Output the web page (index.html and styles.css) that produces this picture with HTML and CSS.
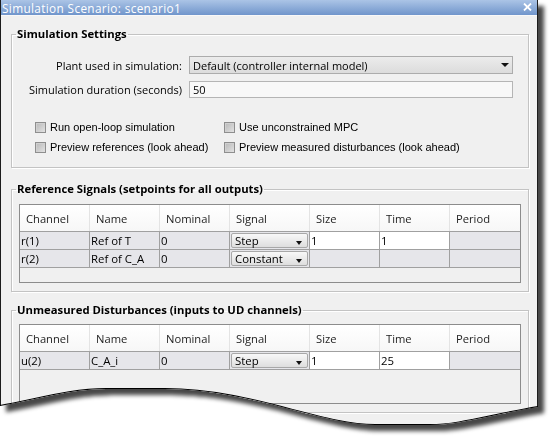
FILE: index.html
```html
<!DOCTYPE html>
<html>
<head>
<meta charset="utf-8">
<title>Simulation Scenario</title>
<link rel="stylesheet" href="styles.css">
</head>
<body>
<div class="shot">
  <div class="window">
    <div class="titlebar">
      <span class="title">Simulation Scenario: scenario1</span>
      <svg class="close" width="9" height="8" viewBox="0 0 9 8"><path d="M1 0.5 L8 7.5 M8 0.5 L1 7.5" stroke="#fff" stroke-width="1.8"/></svg>
    </div>
    <div class="content">
      <fieldset class="group g1">
        <legend>Simulation Settings</legend>
        <div class="form">
          <label class="flabel">Plant used in simulation:</label>
          <div class="combo"><span>Default (controller internal model)</span><span class="arrow"></span></div>
          <label class="flabel">Simulation duration (seconds)</label>
          <div class="textfield">50</div>
        </div>
        <div class="checks">
          <div class="check"><span class="box"></span>Run open-loop simulation</div>
          <div class="check"><span class="box"></span>Use unconstrained MPC</div>
          <div class="check"><span class="box"></span>Preview references (look ahead)</div>
          <div class="check"><span class="box"></span>Preview measured disturbances (look ahead)</div>
        </div>
      </fieldset>

      <fieldset class="group g2">
        <legend>Reference Signals (setpoints for all outputs)</legend>
        <div class="table">
          <div class="thead">
            <div class="th">Channel</div><div class="th">Name</div><div class="th">Nominal</div><div class="th">Signal</div><div class="th">Size</div><div class="th">Time</div><div class="th">Period</div>
          </div>
          <div class="tbody">
            <div class="td">r(1)</div><div class="td">Ref of T</div><div class="td">0</div>
            <div class="td sig"><div class="cellcombo"><span>Step</span><span class="arrow small"></span></div></div>
            <div class="td edit">1</div><div class="td edit">1</div><div class="td last"></div>
            <div class="td">r(2)</div><div class="td">Ref of C_A</div><div class="td">0</div>
            <div class="td sig"><div class="cellcombo"><span>Constant</span><span class="arrow small"></span></div></div>
            <div class="td"></div><div class="td"></div><div class="td last"></div>
          </div>
        </div>
      </fieldset>

      <fieldset class="group g3">
        <legend>Unmeasured Disturbances (inputs to UD channels)</legend>
        <div class="table t3">
          <div class="thead">
            <div class="th">Channel</div><div class="th">Name</div><div class="th">Nominal</div><div class="th">Signal</div><div class="th">Size</div><div class="th">Time</div><div class="th">Period</div>
          </div>
          <div class="tbody">
            <div class="td">u(2)</div><div class="td">C_A_i</div><div class="td">0</div>
            <div class="td sig"><div class="cellcombo"><span>Step</span><span class="arrow small"></span></div></div>
            <div class="td edit">1</div><div class="td edit">25</div><div class="td last"></div>
          </div>
        </div>
      </fieldset>
    </div>
    <svg class="edge" width="538" height="439" viewBox="0 0 538 439">
      <path d="M538 407 C490 415 460 425 430 425 L375 425 C320 425 250 389 165 389 L106 389 C70 389 35 400 0 406" fill="none" stroke="#000" stroke-width="2"/>
    </svg>
  </div>
</div>
</body>
</html>
```

FILE: styles.css
```css
html, body {
  margin: 0;
  padding: 0;
  background: #ffffff;
}

.shot {
  width: 538px;
  filter: drop-shadow(6px 6px 2px rgba(0, 0, 0, 0.72));
}

.window {
  position: relative;
  box-sizing: border-box;
  width: 538px;
  height: 439px;
  border-left: 1px solid #1c1c1c;
  border-right: 1px solid #1c1c1c;
  background: #f0f0f0;
  clip-path: path('M0 0 H538 V407 C490 415 460 425 430 425 L375 425 C320 425 250 389 165 389 L106 389 C70 389 35 400 0 406 Z');
  font-family: "Open Sans", "Noto Sans", sans-serif;
  font-size: 11px;
  color: #000;
}

.titlebar {
  height: 16px;
  background: linear-gradient(#abc4e6 0%, #7095cb 94%, #f8f8f8 94%);
  display: flex;
  align-items: center;
  justify-content: space-between;
  padding: 0 5px 0 1px;
  color: #fff;
  font-size: 11.8px;
  letter-spacing: 0.35px;
  line-height: 16px;
}

.close {
  display: block;
  margin-top: -2px;
}

.content {
  padding: 10px 8px 0 10px;
}

.group {
  margin: 0;
  padding: 0;
  min-width: 0;
  border: 1px solid #c3c3c3;
  box-shadow: inset 1px 1px 0 #fff, 1px 1px 0 #fff;
}

.group legend {
  margin-left: 4px;
  padding: 0 1px;
  font-weight: bold;
  font-size: 11.3px;
  line-height: 16px;
}

.g2 { margin-top: 13px; }
.g3 { margin-top: 10px; }

.form {
  display: grid;
  grid-template-columns: 170px 324px;
  column-gap: 7px;
  row-gap: 7px;
  margin-top: 14px;
}

.flabel {
  justify-self: end;
  align-self: center;
}

.combo {
  box-sizing: border-box;
  height: 18px;
  border: 1px solid #acacac;
  background: linear-gradient(#ececec, #dcdcdc);
  display: flex;
  align-items: center;
  justify-content: space-between;
  padding: 0 3px 0 3px;
}

.arrow {
  width: 0;
  height: 0;
  border-left: 4px solid transparent;
  border-right: 4px solid transparent;
  border-top: 4px solid #111;
}

.textfield {
  box-sizing: border-box;
  height: 17px;
  border: 1px solid #b5b5b5;
  background: #f8f8f8;
  padding: 0 3px;
  display: flex;
  align-items: center;
}

.checks {
  display: grid;
  grid-template-columns: 189px auto;
  grid-auto-rows: 20px;
  margin: 19px 0 10px 23px;
  font-family: "Liberation Sans", Arial, sans-serif;
  font-size: 11px;
}

.check {
  display: flex;
  align-items: center;
  gap: 4px;
}

.box {
  box-sizing: border-box;
  width: 11px;
  height: 11px;
  border: 1px solid #8e8e8e;
  background: linear-gradient(135deg, #b8b8b8, #e2e2e2);
  box-shadow: inset 1px 1px 0 #d0d0d0;
}

.table {
  box-sizing: border-box;
  margin: 7px 7px 8px 7px;
  height: 79px;
  border: 1px solid #8c8c8c;
  background: #f0f0f0;
}

.t3 {
  margin-top: 6px;
  height: 80px;
}

.thead, .tbody {
  display: grid;
  grid-template-columns: 70px 70px 70px 80px 70px 70px 70px;
}

.thead {
  height: 26px;
  background: linear-gradient(#ffffff, #f7f7f7);
}

.th {
  box-sizing: border-box;
  border-right: 1px solid #e4e4e4;
  padding: 6px 0 0 6px;
  color: #1e1e1e;
  font-size: 11.2px;
}

.th:last-child { border-right: none; }

.tbody {
  border-top: 1px solid #a0a0a0;
  grid-auto-rows: 18px;
}

.td {
  box-sizing: border-box;
  border-right: 1px solid #a0a0a0;
  border-bottom: 1px solid #a0a0a0;
  background: #e6e6ea;
  padding-left: 1px;
  line-height: 17px;
  font-size: 11.4px;
  white-space: nowrap;
  overflow: hidden;
}

.td.last { border-right: none; }
.td.edit { background: #ffffff; }
.td.sig { padding: 1px; }

.cellcombo {
  box-sizing: border-box;
  height: 15px;
  border: 1px solid #a8a8a8;
  border-radius: 2px;
  background: linear-gradient(#f8f8f8, #dedede);
  display: flex;
  align-items: flex-end;
  justify-content: space-between;
  padding: 0 5px 0 3px;
  line-height: 13px;
}

.arrow.small {
  border-left-width: 3.5px;
  border-right-width: 3.5px;
  border-top-width: 4px;
  margin-bottom: 2px;
}

.edge {
  position: absolute;
  left: -1px;
  top: 0;
  pointer-events: none;
}
```
